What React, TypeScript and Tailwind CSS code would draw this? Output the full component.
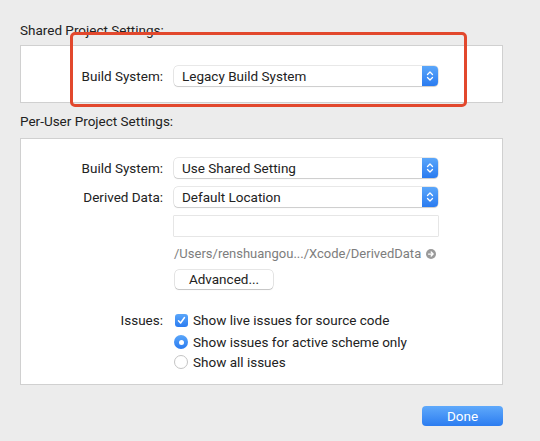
import React from 'react';

const font = { fontFamily: 'Roboto, "Liberation Sans", sans-serif' };

const Stepper: React.FC = () => (
    <div className="w-[16px] h-full rounded-r-[4px] bg-gradient-to-b from-[#5aa6fa] to-[#2a7bf0] flex items-center justify-center">
        <svg width="8" height="12" viewBox="0 0 8 12" fill="none" stroke="white" strokeWidth="1.3" strokeLinecap="round" strokeLinejoin="round">
            <path d="M1.5 4.5 L4 2 L6.5 4.5" />
            <path d="M1.5 7.5 L4 10 L6.5 7.5" />
        </svg>
    </div>
);

const PopUp: React.FC<{ value: string }> = ({ value }) => (
    <div className="w-[264px] h-[20px] flex bg-white rounded-[4px] shadow-[0_0_0_0.5px_rgba(0,0,0,0.18),0_1px_1px_rgba(0,0,0,0.12)]">
        <span className="flex-1 pl-[8px] text-[13.5px] leading-[20px] text-[#222]">{value}</span>
        <Stepper />
    </div>
);

const Row: React.FC<{ label: string; children: React.ReactNode; className?: string }> = ({ label, children, className }) => (
    <div className={`flex items-center leading-[16px] ${className ?? ''}`}>
        <span className="w-[153px] text-right pr-[11px] text-[13.5px] text-[#222] shrink-0">{label}</span>
        {children}
    </div>
);

const App: React.FC = () => {
    return (
        <div className="w-[540px] h-[441px] bg-[#ececec] relative" style={font}>
            <div className="pl-[20px] pr-[37px] pt-[22px]">
                <div className="text-[13.5px] leading-[16px] text-[#222]">Shared Project Settings:</div>
                <div className="mt-[7px] h-[58px] bg-white border border-[#d0d0d0] pt-[20px]">
                    <Row label="Build System:">
                        <PopUp value="Legacy Build System" />
                    </Row>
                </div>

                <div className="mt-[10px] text-[13.5px] leading-[16px] text-[#222]">Per-User Project Settings:</div>
                <div className="mt-[9px] h-[247px] bg-white border border-[#d0d0d0] pt-[19px]">
                    <Row label="Build System:">
                        <PopUp value="Use Shared Setting" />
                    </Row>
                    <Row label="Derived Data:" className="mt-[9px]">
                        <PopUp value="Default Location" />
                    </Row>
                    <div className="ml-[153px] mt-[9px] w-[264px] h-[20px] bg-white shadow-[0_0_0_0.5px_rgba(0,0,0,0.2)]" />
                    <div className="ml-[153px] mt-[10px] w-[264px] flex items-center gap-[5px] text-[13px] leading-[16px] text-[#7d7d7d] whitespace-nowrap">
                        <span>/Users/renshuangou.../Xcode/DerivedData</span>
                        <svg className="shrink-0" width="10" height="10" viewBox="0 0 12 12">
                            <circle cx="6" cy="6" r="6" fill="#9a9a9a" />
                            <path d="M3 6 H8.5 M6.2 3.6 L8.6 6 L6.2 8.4" stroke="white" strokeWidth="1.5" fill="none" strokeLinecap="round" strokeLinejoin="round" />
                        </svg>
                    </div>
                    <div className="ml-[154px] mt-[8px] w-[98px] h-[19px] bg-white rounded-[4px] shadow-[0_0_0_0.5px_rgba(0,0,0,0.2),0_1px_1px_rgba(0,0,0,0.15)] text-[13.5px] leading-[19px] text-center text-[#222]">
                        Advanced...
                    </div>

                    <Row label="Issues:" className="mt-[23px]">
                        <span className="w-[13px] h-[13px] ml-[1px] rounded-[3px] bg-gradient-to-b from-[#5aa6fa] to-[#2a7bf0] flex items-center justify-center">
                            <svg width="9" height="9" viewBox="0 0 9 9" fill="none" stroke="white" strokeWidth="1.5" strokeLinecap="round" strokeLinejoin="round">
                                <path d="M1.5 4.8 L3.6 7 L7.5 1.5" />
                            </svg>
                        </span>
                        <span className="ml-[5px] text-[13.5px] text-[#222]">Show live issues for source code</span>
                    </Row>
                    <div className="ml-[153px] mt-[6px] flex items-center leading-[16px]">
                        <span className="w-[14px] h-[14px] rounded-full bg-gradient-to-b from-[#5aa6fa] to-[#2a7bf0] flex items-center justify-center">
                            <span className="w-[5px] h-[5px] rounded-full bg-white" />
                        </span>
                        <span className="ml-[5px] text-[13.5px] text-[#222]">Show issues for active scheme only</span>
                    </div>
                    <div className="ml-[153px] mt-[4px] flex items-center leading-[16px]">
                        <span className="w-[14px] h-[14px] rounded-full bg-white border border-[#c4c4c4]" />
                        <span className="ml-[5px] text-[13.5px] text-[#222]">Show all issues</span>
                    </div>
                </div>

                <div className="mt-[21px] flex justify-end">
                    <div className="w-[81px] h-[20px] rounded-[4px] bg-gradient-to-b from-[#5fa9fb] to-[#2b7cf0] text-white text-[13.5px] leading-[20px] text-center">
                        Done
                    </div>
                </div>
            </div>

            {/* red highlight frame around the shared build system row */}
            <div className="absolute left-[70px] top-[32px] w-[397px] h-[75px] border-[3px] border-[#e2482d] rounded-[5px]" />
        </div>
    );
};

export default App;
